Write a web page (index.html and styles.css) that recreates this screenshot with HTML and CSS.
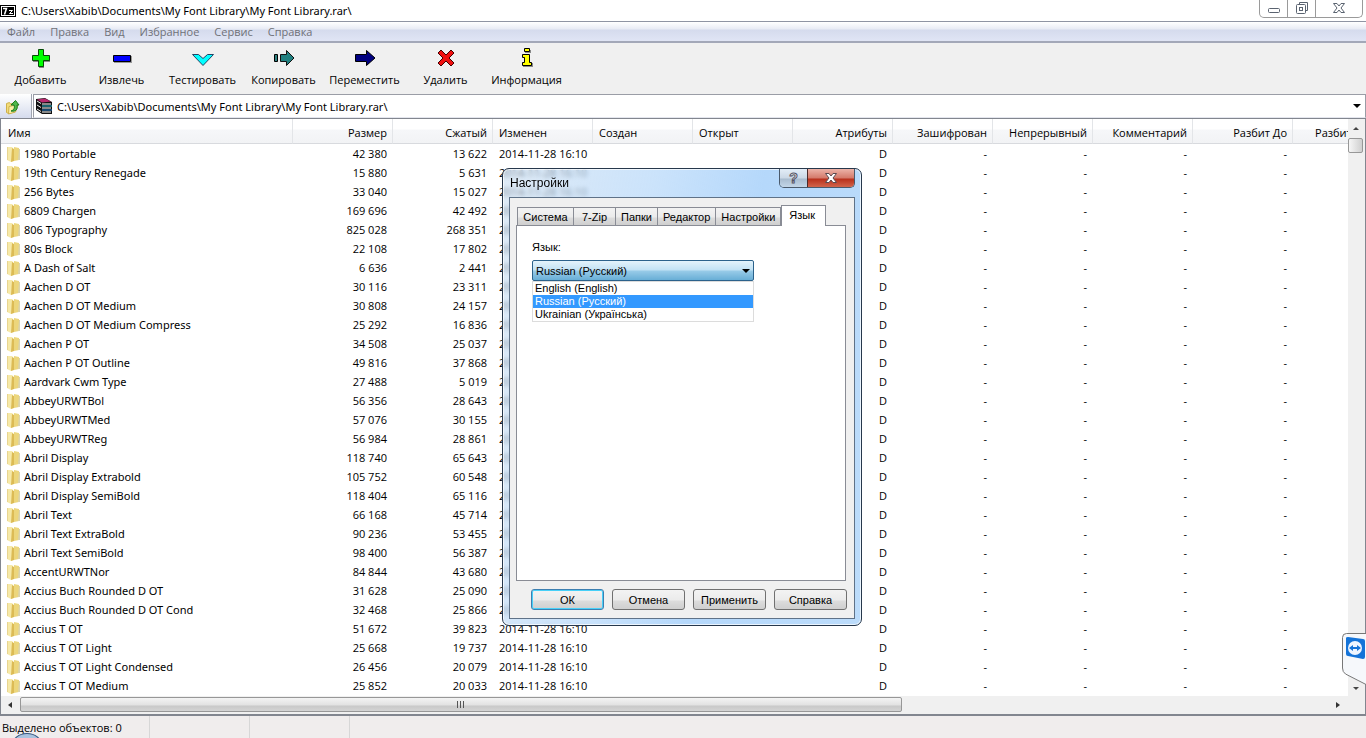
FILE: index.html
```html
<!DOCTYPE html>
<html lang="ru">
<head>
    <meta charset="UTF-8">
    <meta name="viewport" content="width=device-width, initial-scale=1.0">
    <title>7-Zip</title>
    <link rel="stylesheet" href="styles.css">
</head>
<body>
    <div class="window">
        <header class="titlebar">
            <svg class="app-icon" width="16" height="12" viewBox="0 0 16 12">
                <rect width="16" height="12" fill="#000"/>
                <rect x="1" y="1" width="14" height="10" fill="#fff"/>
                <rect x="2" y="2" width="12" height="8" fill="#000"/>
                <path d="M3 3.500h3.500L4.500 9.500" fill="none" stroke="#fff" stroke-width="1.500"/>
                <path d="M9 5.500h3.500L9.500 8.500H13" fill="none" stroke="#fff"/>
            </svg>
            <span class="title">C:\Users\Xabib\Documents\My Font Library\My Font Library.rar\</span>
            <div class="caption-buttons">
                <button class="cap-min" aria-label="Свернуть">
                    <svg width="14" height="14" viewBox="0 0 14 14"><rect x="1.5" y="7.5" width="11" height="4" rx="1" fill="#fff" stroke="#5a6370"/></svg>
                </button>
                <button class="cap-max" aria-label="Развернуть">
                    <svg width="14" height="14" viewBox="0 0 14 14"><path d="M4.500 3.500v-2h8v8h-2" fill="#fff" stroke="#5a6370"/><rect x="1.500" y="3.500" width="9" height="9" rx="1" fill="#fff" stroke="#5a6370"/><rect x="4.500" y="6.500" width="3" height="3" fill="#fff" stroke="#5a6370"/></svg>
                </button>
                <button class="cap-close" aria-label="Закрыть">
                    <svg width="14" height="14" viewBox="0 0 14 14"><path d="M1.500 2.500h3.500l2 2.500 2-2.500h3.500l-3.500 4.500 3.500 4.500H9L7 9l-2 2.500H1.500L5 7z" fill="#fff" stroke="#5a6370"/></svg>
                </button>
            </div>
        </header>

        <nav class="menu">
            <button>Файл</button>
            <button>Правка</button>
            <button>Вид</button>
            <button>Избранное</button>
            <button>Сервис</button>
            <button>Справка</button>
        </nav>

        <div class="toolbar">
            <button>
                <svg width="22" height="22" viewBox="1 1 22 22"><path d="M10 4h5v6h6v5h-6v6h-5v-6H4v-5h6z" fill="#888"/><path d="M9.500 2.500h5v6h6v5h-6v6h-5v-6h-6v-5h6z" fill="#0f0" stroke="#064a06"/></svg>
                Добавить
            </button>
            <button>
                <svg width="22" height="22" viewBox="1 1 22 22"><path d="M4 9h18v7H4z" fill="#999"/><path d="M3.500 8.500h17v6h-17z" fill="#00f" stroke="#000"/></svg>
                Извлечь
            </button>
            <button>
                <svg width="22" height="22" viewBox="1 1 22 22"><path d="M1.500 7.500h6l4.500 4 4.500-4h6L12 18.500z" fill="#0ff" stroke="#246"/></svg>
                Тестировать
            </button>
            <button>
                <svg width="22" height="22" viewBox="1 1 22 22"><path d="M2.500 7.500h3v7h-3z" fill="#308080" stroke="#000"/><path d="M8.500 7.500h6v-4l7.500 7.500-7.500 7.500v-4h-6z" fill="#208080" stroke="#111"/></svg>
                Копировать
            </button>
            <button>
                <svg width="22" height="22" viewBox="1 1 22 22"><path d="M2.500 7.500h11v-4l8.500 7.500-8.500 7.500v-4h-11z" fill="#000080" stroke="#000"/></svg>
                Переместить
            </button>
            <button>
                <svg width="22" height="22" viewBox="1 1 22 22"><path d="M7 3l5 5 5-5 3 3-5 5 5 5-3 3-5-5-5 5-3-3 5-5-5-5z" fill="#f01010" stroke="#400"/></svg>
                Удалить
            </button>
            <button>
                <svg width="22" height="22" viewBox="1 1 22 22"><path d="M10 3h6v3h-6zM8 8h7v8h3v4H8v-4h3v-5H8z" fill="#888"/><path d="M9.500 1.500h5v3h-5zM7.500 7.500h7v8h2v3h-9v-3h2v-5h-2z" fill="#ff0" stroke="#000"/></svg>
                Информация
            </button>
        </div>

        <div class="address">
            <button class="up" aria-label="Вверх">
                <svg width="16" height="16" viewBox="0 0 16 16"><path d="M1.500 4.500l3-1 1 1.500 5-1.500v9l-7 2-2-1z" fill="#f3dc7a" stroke="#cdb04c"/><path d="M4 7.500l9-2-2.500 7.500-7 2z" fill="#fbf0a9" stroke="#cdb04c"/><path d="M6 12c3-1 4-3 3-6H6l4.500-4.500L14 6h-2c1 4-1 7-6 6z" fill="#4fb84a" stroke="#18791c"/></svg>
            </button>
            <div class="path">
                <svg width="16" height="16" viewBox="0 0 16 16">
                    <path d="M0 1l9-1 7 4v12H6L0 12z" fill="#111"/>
                    <path d="M1 1.500l8-1 6 3-9 1z" fill="#b8286e"/>
                    <path d="M6 5.500h9v1H6zM6 9.500h9v1H6zM6 13.500h9v1H6z" fill="#fff"/>
                    <path d="M6 7.500h10v1H6z" fill="#25b5cf"/>
                    <path d="M6 11.500h10v1H6z" fill="#1f7ed0"/>
                    <path d="M1 3l4 2.500M1 7l4 2.500M1 11l4 2.500" stroke="#eee" fill="none"/>
                </svg>
                <input type="text" aria-label="Адрес" value="C:\Users\Xabib\Documents\My Font Library\My Font Library.rar\">
                <i class="arrow down"></i>
            </div>
        </div>

        <main class="panel">
            <div class="list">
                <table>
                    <colgroup>
                        <col class="col-name">
                        <col span="11" class="col">
                    </colgroup>
                    <thead>
                        <tr>
                            <th class="left first">Имя</th>
                            <th>Размер</th>
                            <th>Сжатый</th>
                            <th class="left">Изменен</th>
                            <th class="left">Создан</th>
                            <th class="left">Открыт</th>
                            <th>Атрибуты</th>
                            <th>Зашифрован</th>
                            <th>Непрерывный</th>
                            <th>Комментарий</th>
                            <th>Разбит До</th>
                            <th>Разбит После</th>
                        </tr>
                    </thead>
                    <tbody id="files"></tbody>
                </table>
            </div>
            <div class="vscroll">
                <i class="arrow up-small"></i>
                <div class="vthumb"></div>
                <i class="arrow down-small"></i>
            </div>
            <div class="hscroll">
                <i class="arrow left-small"></i>
                <div class="htrack"><div class="hthumb"><span></span><span></span><span></span></div></div>
                <i class="arrow right-small"></i>
            </div>
        </main>

        <footer class="status">
            <span>Выделено объектов: 0</span>
            <span></span>
            <span></span>
        </footer>
    </div>

    <div class="dialog" role="dialog" aria-labelledby="dlg-title">
        <div class="dlg-head">
            <span class="dlg-title" id="dlg-title">Настройки</span>
            <div class="dlg-caption">
                <button class="dlg-help" aria-label="Помощь">?</button>
                <button class="dlg-close" aria-label="Закрыть">
                    <svg width="14" height="14" viewBox="0 0 14 14"><path d="M1.500 2.500h3.500l2 2.500 2-2.500h3.500l-3.500 4.500 3.500 4.500H9L7 9l-2 2.500H1.500L5 7z" fill="#fff" stroke="#5a4a50"/></svg>
                </button>
            </div>
        </div>
        <div class="dlg-body">
            <div class="tabs">
                <button>Система</button>
                <button>7-Zip</button>
                <button>Папки</button>
                <button>Редактор</button>
                <button>Настройки</button>
                <button class="active">Язык</button>
            </div>
            <div class="page">
                <label for="lang">Язык:</label>
                <div class="combo">
                    <select id="lang">
                        <option>English (English)</option>
                        <option selected>Russian (Русский)</option>
                        <option>Ukrainian (Українська)</option>
                    </select>
                    <i class="arrow down"></i>
                    <ul class="drop">
                        <li>English (English)</li>
                        <li class="selected">Russian (Русский)</li>
                        <li>Ukrainian (Українська)</li>
                    </ul>
                </div>
            </div>
            <div class="dlg-buttons">
                <button class="default">ОК</button>
                <button>Отмена</button>
                <button>Применить</button>
                <button>Справка</button>
            </div>
        </div>
    </div>

    <svg class="side-tab" width="25" height="54" viewBox="0 0 25 54">
        <path d="M26 1.500H5.500q-4 0-4 4V36q0 4 3 6L26 53" fill="#f6f8fb" stroke="#777"/>
        <path d="M5 6q0-1 2-1l15 2q2 0 2 2v16q0 2-2 2L7 24q-2 0-2-2z" fill="#1473d8"/>
        <circle cx="14" cy="16" r="7" fill="#eef5ff"/>
        <path d="M8 16l4-3v2h4v-2l4 3-4 3v-2h-4v2z" fill="#1473d8"/>
    </svg>
    <div class="orb"></div>

    <script src="script.js"></script>
</body>
</html>
```
FILE: script.js
```js
var files = [
    ["1980 Portable", "42 380", "13 622"],
    ["19th Century Renegade", "15 880", "5 631"],
    ["256 Bytes", "33 040", "15 027"],
    ["6809 Chargen", "169 696", "42 492"],
    ["806 Typography", "825 028", "268 351"],
    ["80s Block", "22 108", "17 802"],
    ["A Dash of Salt", "6 636", "2 441"],
    ["Aachen D OT", "30 116", "23 311"],
    ["Aachen D OT Medium", "30 808", "24 157"],
    ["Aachen D OT Medium Compress", "25 292", "16 836"],
    ["Aachen P OT", "34 508", "25 037"],
    ["Aachen P OT Outline", "49 816", "37 868"],
    ["Aardvark Cwm Type", "27 488", "5 019"],
    ["AbbeyURWTBol", "56 356", "28 643"],
    ["AbbeyURWTMed", "57 076", "30 155"],
    ["AbbeyURWTReg", "56 984", "28 861"],
    ["Abril Display", "118 740", "65 643"],
    ["Abril Display Extrabold", "105 752", "60 548"],
    ["Abril Display SemiBold", "118 404", "65 116"],
    ["Abril Text", "66 168", "45 714"],
    ["Abril Text ExtraBold", "90 236", "53 455"],
    ["Abril Text SemiBold", "98 400", "56 387"],
    ["AccentURWTNor", "84 844", "43 680"],
    ["Accius Buch Rounded D OT", "31 628", "25 090"],
    ["Accius Buch Rounded D OT Cond", "32 468", "25 866"],
    ["Accius T OT", "51 672", "39 823"],
    ["Accius T OT Light", "25 668", "19 737"],
    ["Accius T OT Light Condensed", "26 456", "20 079"],
    ["Accius T OT Medium", "25 852", "20 033"]
];

var folder = '<svg width="14" height="16" viewBox="0 0 14 16">' +
    '<path d="M7 1l5 1v12l-5 1z" fill="#ecd67c"/>' +
    '<path d="M12 3h1v11h-2z" fill="#d9d3ae"/>' +
    '<path d="M0 1h5l1 1v13l-2 1-4-2z" fill="#f6e9a8"/>' +
    '<path d="M5 2l2 1v12l-3 1z" fill="#dcbb55"/>' +
    '<path d="M0 1h1v13H0z" fill="#e8d590"/></svg>';

var rows = "";
for (var i = 0; i < files.length; i++) {
    var f = files[i];
    rows += '<tr><td class="name">' + folder + f[0] + "</td><td>" + f[1] + "</td><td>" + f[2] + "</td>" +
        '<td class="left">2014-11-28 16:10</td><td></td><td></td><td>D</td>' +
        "<td>-</td><td>-</td><td>-</td><td>-</td><td></td></tr>";
}
document.getElementById("files").innerHTML = rows;
```
FILE: styles.css
```css
* {
    box-sizing: border-box;
}

body {
    margin: 0;
    font-family: "Open Sans", "Noto Sans", sans-serif;
    font-size: 11px;
    color: #000;
    background-color: #fff;
    overflow: hidden;
}

button, input, select {
    font: inherit;
    color: inherit;
    margin: 0;
    padding: 0;
    border: none;
    background: none;
}

.window {
    display: flex;
    flex-direction: column;
    height: 100vh;
}

/* Title bar */
.titlebar {
    display: flex;
    align-items: flex-start;
    height: 22px;
    border-bottom: 1px solid #8f94a3;
}

.app-icon {
    margin-top: 5px;
}

.title {
    flex: 1;
    padding-left: 5px;
    font-family: "Noto Sans", sans-serif;
    line-height: 21px;
}

.caption-buttons {
    display: flex;
    height: 18px;
    margin-right: 3px;
    border: 1px solid #9a9a9a;
    border-top: none;
    border-radius: 0 0 5px 5px;
}

.caption-buttons button {
    display: flex;
    justify-content: center;
    align-items: center;
    width: 28px;
    padding-bottom: 1px;
    border-right: 1px solid #9a9a9a;
}

.caption-buttons .cap-close {
    width: 46px;
    border: none;
}

/* Menu */
.menu {
    display: flex;
    gap: 15px;
    height: 21px;
    padding-left: 7px;
    color: #6f7178;
    background: linear-gradient(#fff, #e8ebf5 7px, #d5dbed 8px, #dfe4f4 18px);
    border-bottom: 2px solid #a3a8b8;
}

/* Toolbar */
.toolbar {
    display: flex;
    height: 51px;
    background-color: #f0f0f0;
}

.toolbar button {
    display: flex;
    flex-direction: column;
    align-items: center;
    width: 81px;
    padding-top: 5px;
    line-height: 20px;
}

/* Address bar */
.address {
    display: flex;
    height: 24px;
}

.up {
    width: 32px;
    padding: 4px 0 0 5px;
    text-align: left;
    background: linear-gradient(#fff, #d5dbed);
    border-right: 1px solid #a0a5b0;
}

.path {
    flex: 1;
    display: flex;
    align-items: center;
    gap: 5px;
    margin-left: 1px;
    padding: 0 4px 0 2px;
    border: 1px solid #9a9da6;
    border-bottom-color: #e4e6ee;
}

.path input {
    flex: 1;
    font-family: "Noto Sans", sans-serif;
    outline: none;
}

.arrow {
    display: block;
    width: 0;
    height: 0;
    border: 4px solid transparent;
}

.arrow.down {
    border-top-color: #000;
    border-bottom: none;
}

/* File list */
.panel {
    flex: 1;
    min-height: 0;
    display: grid;
    grid-template-columns: 1fr 17px;
    grid-template-rows: 1fr 18px;
    border: 1px solid #82868f;
    border-bottom-width: 2px;
    background-color: #f0f0f0;
}

.list {
    overflow: hidden;
    background-color: #fff;
}

table {
    width: 1392px;
    table-layout: fixed;
    border-collapse: separate;
    border-spacing: 0;
}

.col-name {
    width: 292px;
}

.col {
    width: 100px;
}

th {
    height: 25px;
    padding: 2px 5px 0 6px;
    font-weight: normal;
    text-align: right;
    background: linear-gradient(#fff 10px, #f6f7f9 11px, #f2f3f5);
    border-right: 1px solid #e3e5e8;
    border-bottom: 1px solid #d8dade;
}

th.first {
    padding-left: 7px;
}

td {
    height: 19px;
    padding: 0 6px;
    line-height: 18px;
    text-align: right;
    white-space: nowrap;
}

th.left, td.left {
    text-align: left;
}

td.name {
    display: flex;
    align-items: center;
    gap: 3px;
    font-family: "Noto Sans", sans-serif;
    text-align: left;
}

/* Scroll bars */
.vscroll {
    display: flex;
    flex-direction: column;
    align-items: center;
    padding: 8px 2px 6px 0;
}

.vthumb {
    width: 15px;
    height: 15px;
    margin-top: 8px;
    margin-bottom: auto;
    border: 1px solid #979797;
    border-radius: 2px;
    background: linear-gradient(to right, #f6f6f6, #cfcfcf);
}

.up-small, .down-small {
    border-width: 3px;
}

.up-small {
    border-top: none;
    border-bottom-color: #444;
}

.down-small {
    border-bottom: none;
    border-top-color: #444;
}

.hscroll {
    display: flex;
    align-items: center;
    margin-right: 8px;
    padding: 0 0 1px 7px;
}

.left-small, .right-small {
    border-width: 3px;
}

.left-small {
    border-left: none;
    border-right: 4px solid #333;
}

.right-small {
    border-right: none;
    border-left: 4px solid #333;
}

.htrack {
    flex: 1;
    margin-left: 8px;
}

.hthumb {
    display: flex;
    justify-content: center;
    align-items: center;
    gap: 2px;
    width: 67%;
    height: 15px;
    border: 1px solid #979797;
    border-radius: 2px;
    background: linear-gradient(#f4f4f4, #e2e2e2 7px, #c9c9c9 8px, #d4d4d4);
}

.hthumb span {
    width: 1px;
    height: 7px;
    background-color: #555;
}

/* Status bar */
.status {
    display: flex;
    height: 22px;
    background-color: #f0eded;
    line-height: 23px;
}

.status span {
    width: 100px;
    border-right: 1px solid #d7d7d7;
}

.status span:first-child {
    width: 150px;
    padding-left: 2px;
}

/* Settings dialog */
.dialog {
    position: absolute;
    left: 502px;
    top: 168px;
    display: flex;
    flex-direction: column;
    width: 360px;
    padding: 0 6px 6px;
    font-family: "Liberation Sans", Arial, sans-serif;
    border: 1px solid #27384c;
    border-radius: 7px;
    background: linear-gradient(100deg, rgba(200, 220, 240, 0.6), rgba(190, 220, 250, 0.8) 35%, #b5d8fb 60%, #bcdcfb);
    backdrop-filter: blur(2px);
    box-shadow: inset 0 0 0 1px rgba(255, 255, 255, 0.7);
}

.dlg-head {
    display: flex;
    justify-content: space-between;
    height: 28px;
    padding-left: 1px;
    line-height: 28px;
}

.dlg-title {
    font-size: 12px;
}

.dlg-caption {
    display: flex;
    height: 19px;
    border: 1px solid #4a5a6c;
    border-top: none;
    border-radius: 0 0 5px 5px;
    overflow: hidden;
}

.dlg-caption button {
    display: flex;
    align-items: center;
    justify-content: center;
}

.dlg-help {
    width: 27px;
    font-size: 14px;
    font-weight: bold;
    color: #fff;
    -webkit-text-stroke: 1px #556;
    background: linear-gradient(#e3edf7, #cbd8e6 9px, #a9bccf 10px, #c3d6e8);
}

.dlg-close {
    width: 47px;
    border-left: 1px solid #4a2a2a;
    background: linear-gradient(#ecb3a8, #d4796a 9px, #b8301c 10px, #d2654c);
}

.dlg-body {
    padding: 7px 8px 8px 6px;
    border: 1px solid #5f7288;
    background-color: #f0f0f0;
}

.tabs {
    display: flex;
    align-items: flex-end;
    height: 20px;
    padding-left: 1px;
}

.tabs button {
    height: 18px;
    min-width: 42px;
    padding: 0 5px;
    border: 1px solid #898c95;
    border-left-width: 0;
    border-bottom: none;
    background: linear-gradient(#f3f3f3, #ebebeb 9px, #dcdcdc 10px, #cfcfcf);
}

.tabs button:first-child {
    width: 57px;
    border-left-width: 1px;
}

.tabs .active {
    z-index: 1;
    height: 21px;
    margin-bottom: -1px;
    padding: 0 10px 2px 7px;
    border-left-width: 1px;
    background: #fff;
}

.page {
    height: 356px;
    padding: 14px 15px;
    border: 1px solid #898c95;
    background-color: #fff;
}

.page label {
    display: block;
    line-height: 14px;
}

.combo {
    position: relative;
    width: 222px;
    margin-top: 6px;
}

.combo select {
    display: block;
    width: 100%;
    height: 21px;
    padding-left: 3px;
    appearance: none;
    border: 1px solid #2c628b;
    border-radius: 2px;
    background: linear-gradient(#e4f3fb, #c2e2f4 9px, #98cbe8 10px, #68aed6);
}

.combo .arrow {
    position: absolute;
    right: 4px;
    top: 9px;
}

.drop {
    position: absolute;
    top: 21px;
    left: 0;
    width: 100%;
    margin: 0;
    padding: 0;
    list-style: none;
    border: 1px solid #dcdcdc;
    background-color: #fff;
}

.drop li {
    padding-left: 2px;
    line-height: 13px;
}

.drop .selected {
    color: #fff;
    background-color: #3399ff;
}

.dlg-buttons {
    display: flex;
    gap: 8px;
    padding: 8px 0 0 15px;
}

.dlg-buttons button {
    flex: none;
    width: 73px;
    height: 21px;
    border: 1px solid #707070;
    border-radius: 3px;
    background: linear-gradient(#f3f3f3, #ebebeb 10px, #dcdcdc 11px, #cfcfcf);
}

.dlg-buttons .default {
    border-color: #3c7fb1;
    box-shadow: inset 0 0 0 1px #48d0f8;
}

/* Things lying over the window */
.side-tab {
    position: absolute;
    right: 0;
    top: 632px;
}

.orb {
    position: absolute;
    left: 12px;
    bottom: -19px;
    width: 30px;
    height: 24px;
    border: 1px solid #33557f;
    border-radius: 50%;
    background-color: #a9c3df;
}
```
